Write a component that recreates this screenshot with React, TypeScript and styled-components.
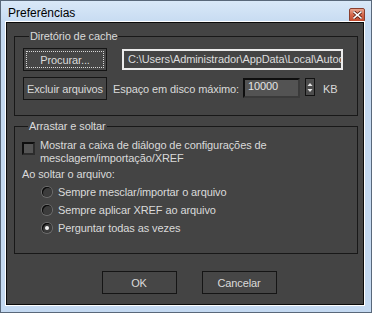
import styled, { createGlobalStyle } from 'styled-components';

const GlobalStyle = createGlobalStyle`
  html, body {
    margin: 0;
    padding: 0;
    background: #ffffff;
  }
  body {
    font-family: 'Liberation Sans', Arial, sans-serif;
    font-size: 11px;
    letter-spacing: -0.1px;
  }
`;

const radioOptions = [
  { label: 'Sempre mesclar/importar o arquivo', checked: false },
  { label: 'Sempre aplicar XREF ao arquivo', checked: false },
  { label: 'Perguntar todas as vezes', checked: true },
];

export default function App() {
  return (
    <>
      <GlobalStyle />
      <Window>
        <TitleBar>
          <Title>Preferências</Title>
          <CloseButton aria-label="Fechar">
            <svg width="9" height="8" viewBox="0 0 9 8">
              <path
                d="M1 1 L8 7 M8 1 L1 7"
                stroke="#5a1e12"
                strokeWidth="3.2"
                strokeLinecap="square"
              />
              <path
                d="M1 1 L8 7 M8 1 L1 7"
                stroke="#ffffff"
                strokeWidth="1.6"
                strokeLinecap="square"
              />
            </svg>
          </CloseButton>
        </TitleBar>
        <Client>
          <Group>
            <Legend>Diretório de cache</Legend>
            <Row>
              <Button $focused>
                <span>Procurar...</span>
              </Button>
              <PathField>C:\Users\Administrador\AppData\Local\Autodesk\3dsMax\cache</PathField>
            </Row>
            <Row>
              <Button>
                <span>Excluir arquivos</span>
              </Button>
              <Label>Espaço em disco máximo:</Label>
              <NumberField>10000</NumberField>
              <Spinner>
                <svg width="8" height="15" viewBox="0 0 8 15">
                  <path d="M4 3 L6.5 6 L1.5 6 Z" fill="#e6e6e6" />
                  <path d="M4 12 L6.5 9 L1.5 9 Z" fill="#e6e6e6" />
                </svg>
              </Spinner>
              <Unit>KB</Unit>
            </Row>
          </Group>

          <Group $second>
            <Legend>Arrastar e soltar</Legend>
            <CheckRow>
              <CheckBox />
              <CheckText>
                Mostrar a caixa de diálogo de configurações de
                <br />
                mesclagem/importação/XREF
              </CheckText>
            </CheckRow>
            <SubLabel>Ao soltar o arquivo:</SubLabel>
            <RadioList>
              {radioOptions.map((opt) => (
                <RadioRow key={opt.label}>
                  <Radio $checked={opt.checked} />
                  <span>{opt.label}</span>
                </RadioRow>
              ))}
            </RadioList>
          </Group>

          <Footer>
            <DialogButton>OK</DialogButton>
            <DialogButton>Cancelar</DialogButton>
          </Footer>
        </Client>
      </Window>
    </>
  );
}

const Window = styled.div`
  width: 372px;
  height: 313px;
  box-sizing: border-box;
  border: 1px solid #59687a;
  background: #c4d9f1;
  padding: 0 6px 6px 4px;
  display: flex;
  flex-direction: column;
`;

const TitleBar = styled.div`
  height: 20px;
  display: flex;
  align-items: flex-start;
  justify-content: space-between;
  background: linear-gradient(#d9e8f8, #c8dcf2);
  margin: 0 -6px 0 -4px;
  padding: 0 6px 0 7px;
`;

const Title = styled.div`
  font-size: 12px;
  letter-spacing: 0;
  color: #000000;
  line-height: 14px;
  padding-top: 5px;
`;

const CloseButton = styled.div`
  width: 16px;
  height: 14px;
  margin-top: 7px;
  box-sizing: border-box;
  border: 1px solid #8a3e2e;
  border-radius: 2px;
  background: linear-gradient(#e9a58f, #d4664a 50%, #c24a2e);
  display: flex;
  align-items: center;
  justify-content: center;
`;

const Client = styled.div`
  flex: 1;
  border: 1px solid #ffffff;
  box-shadow: inset 0 0 0 1px #0b0b0b;
  background: #444444;
  padding: 8px 6px 0 8px;
  color: #dadada;
  display: flex;
  flex-direction: column;
`;

const Group = styled.fieldset<{ $second?: boolean }>`
  margin: ${({ $second }) => ($second ? '4px 0 0 0' : '0')};
  padding: ${({ $second }) => ($second ? '0 8px 18px 7px' : '5px 8px 15px 8px')};
  border: 1px solid #181818;
  min-width: 0;
  display: flex;
  flex-direction: column;
  gap: 6px;
`;

const Legend = styled.legend`
  padding: 0 1px;
  margin-left: 6px;
  line-height: 13px;
  color: #dadada;
`;

const Row = styled.div`
  display: flex;
  align-items: center;
  height: 23px;
`;

const Button = styled.div<{ $focused?: boolean }>`
  width: 84px;
  height: 23px;
  box-sizing: border-box;
  border: 1px solid #151515;
  background: #464646;
  display: flex;
  align-items: center;
  justify-content: center;
  padding: 2px;
  flex-shrink: 0;
  white-space: nowrap;

  span {
    flex: 1;
    align-self: stretch;
    display: flex;
    align-items: center;
    justify-content: center;
    border: 1px dotted ${({ $focused }) => ($focused ? '#d8d8d8' : 'transparent')};
  }
`;

const PathField = styled.div`
  margin-left: 15px;
  width: 221px;
  height: 21px;
  box-sizing: border-box;
  border: 2px solid #ececec;
  padding: 0 4px;
  line-height: 17px;
  white-space: nowrap;
  overflow: hidden;
  color: #dcdcdc;
`;

const Label = styled.span`
  margin-left: 6px;
  width: 130px;
  flex-shrink: 0;
  white-space: nowrap;
`;

const NumberField = styled.div`
  width: 57px;
  height: 20px;
  box-sizing: border-box;
  border: 2px solid #0e0e0e;
  border-right-color: #3a3a3a;
  border-bottom-color: #3a3a3a;
  background: #535353;
  padding: 0 3px;
  line-height: 13px;
  color: #e4e4e4;
  align-self: flex-start;
  margin-top: 1px;
`;

const Spinner = styled.div`
  margin-left: 5px;
  width: 10px;
  height: 18px;
  box-sizing: border-box;
  border: 1px solid #121212;
  background: #4c4c4c;
  display: flex;
  align-items: center;
  justify-content: center;
  align-self: flex-start;
  margin-top: 1px;
`;

const Unit = styled.span`
  margin-left: 8px;
`;

const CheckRow = styled.div`
  display: flex;
  align-items: flex-start;
  gap: 5px;
  margin-top: 6px;
`;

const CheckBox = styled.div`
  width: 13px;
  height: 13px;
  box-sizing: border-box;
  border: 2px solid #0e0e0e;
  border-right-color: #2c2c2c;
  border-bottom-color: #2c2c2c;
  background: #555555;
  margin-top: 3px;
  flex-shrink: 0;
`;

const CheckText = styled.div`
  line-height: 13px;
`;

const SubLabel = styled.div`
  line-height: 13px;
  margin-top: -3px;
`;

const RadioList = styled.div`
  display: flex;
  flex-direction: column;
  gap: 4px;
  padding-left: 20px;
  margin-top: -2px;
`;

const RadioRow = styled.div`
  display: flex;
  align-items: center;
  gap: 6px;
  height: 14px;
`;

const Radio = styled.div<{ $checked: boolean }>`
  width: 10px;
  height: 10px;
  border-radius: 50%;
  box-sizing: border-box;
  background: radial-gradient(circle at 50% 50%, #3c3c3c 55%, #2a2a2a 100%);
  box-shadow: inset 1px 1px 0 #0a0a0a, 0 0 0 1px #6e6e6e;
  display: flex;
  align-items: center;
  justify-content: center;

  &::after {
    content: '';
    width: 4px;
    height: 4px;
    border-radius: 50%;
    background: ${({ $checked }) => ($checked ? '#f2f2f2' : 'transparent')};
  }
`;

const Footer = styled.div`
  display: flex;
  justify-content: center;
  gap: 25px;
  margin-top: 17px;
  padding-left: 6px;
`;

const DialogButton = styled.div`
  width: 75px;
  height: 23px;
  box-sizing: border-box;
  border: 1px solid #151515;
  background: #464646;
  display: flex;
  align-items: center;
  justify-content: center;
`;
